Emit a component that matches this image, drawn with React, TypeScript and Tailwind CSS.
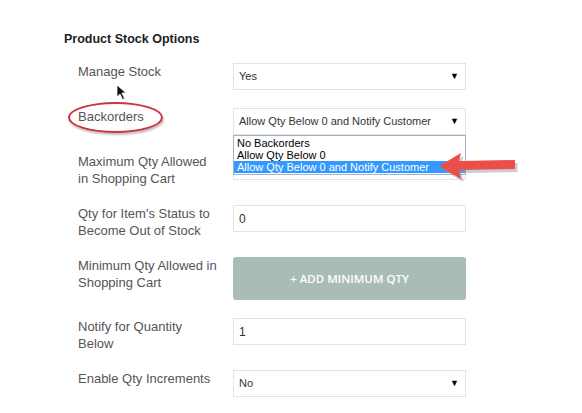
import React from "react";

const FONT = { fontFamily: '"Liberation Sans", Arial, sans-serif' };

function Caret() {
  return <span className="text-[9px] leading-none text-black">▼</span>;
}

function Select({ value }: { value: string }) {
  return (
    <div className="flex h-[27px] w-[233px] items-center justify-between border border-[#e3e3e3] bg-white pl-[5px] pr-[6px] text-[11px] text-[#333]">
      <span>{value}</span>
      <Caret />
    </div>
  );
}

function Input({ value }: { value: string }) {
  return (
    <div className="flex h-[27px] w-[233px] items-center border border-[#e3e3e3] bg-white pl-[5px] text-[12px] text-[#333]">
      {value}
    </div>
  );
}

function Row({ label, children }: { label: React.ReactNode; children: React.ReactNode }) {
  return (
    <div className="flex items-start">
      <div className="w-[155px] pr-2 text-[13px] leading-[17px] text-[#555]">{label}</div>
      {children}
    </div>
  );
}

export default function App() {
  return (
    <div className="relative h-[413px] w-[582px] overflow-hidden bg-white" style={FONT}>
      <div className="pl-[64px] pt-[31px]">
        <h2 className="text-[12.5px] font-bold leading-[16px] text-[#222]">Product Stock Options</h2>
        <div className="mt-[16px] flex flex-col gap-[18px] pl-[14px]">
          <Row label="Manage Stock">
            <Select value="Yes" />
          </Row>
          <Row label="Backorders">
            <div className="relative">
              <Select value="Allow Qty Below 0 and Notify Customer" />
              <div className="absolute left-0 top-[27px] z-10 w-[233px] border border-[#9fb3cc] bg-white text-[11px] leading-[12px] text-black">
                <div className="pl-[3px] pt-px">No Backorders</div>
                <div className="pl-[3px]">Allow Qty Below 0</div>
                <div className="bg-[#3399ff] pl-[3px] text-white">Allow Qty Below 0 and Notify Customer</div>
                <div className="h-[1px]" />
              </div>
            </div>
          </Row>
          <Row label={<>Maximum Qty Allowed<br />in Shopping Cart</>}>
            <Input value="" />
          </Row>
          <Row label={<>Qty for Item's Status to<br />Become Out of Stock</>}>
            <Input value="0" />
          </Row>
          <Row label={<>Minimum Qty Allowed in<br />Shopping Cart</>}>
            <button
              className="flex h-[43px] w-[233px] items-center justify-center rounded-[3px] bg-[#a9bcb6] text-[11.5px] font-semibold text-white"
              style={{ fontFamily: '"Open Sans", Lato, sans-serif' }}
            >
              + ADD MINIMUM QTY
            </button>
          </Row>
          <Row label={<>Notify for Quantity<br />Below</>}>
            <Input value="1" />
          </Row>
          <Row label="Enable Qty Increments">
            <Select value="No" />
          </Row>
        </div>
      </div>

      {/* red highlight ellipse */}
      <div className="absolute left-[68px] top-[102px] h-[31px] w-[95px] rounded-[50%] border-2 border-[#c8343f] shadow-[1px_2px_2px_rgba(0,0,0,0.25)]" />

      {/* mouse cursor */}
      <svg className="absolute left-[116px] top-[84px]" width="12" height="17" viewBox="0 0 12 17">
        <path d="M1 1 L1 13 L4 10 L6.5 15.5 L8.5 14.5 L6 9 L10 9 Z" fill="#111" stroke="#fff" strokeWidth="0.8" />
      </svg>

      {/* red pointing arrow */}
      <svg className="absolute left-[436px] top-[150px] z-20" width="84" height="34" viewBox="0 0 84 34">
        <path d="M4 17 L26 4 L24 12 L80 11 L80 20 L24 21 L26 30 Z" fill="#999" opacity="0.5" transform="translate(1.5 2)" />
        <path d="M3 16 L25 3 L23 11 L79 10 L79 19 L23 20 L25 29 Z" fill="#ea4f4a" />
      </svg>
    </div>
  );
}
